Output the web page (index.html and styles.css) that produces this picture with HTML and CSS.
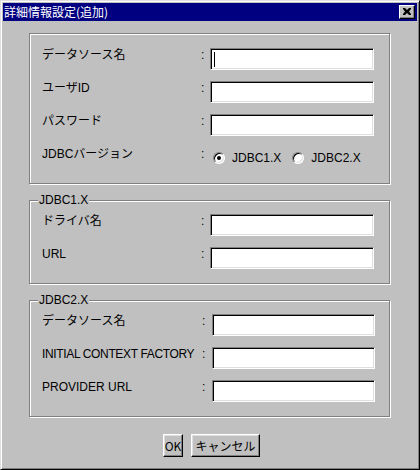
FILE: index.html
```html
<!DOCTYPE html>
<html lang="ja">
<head>
<meta charset="utf-8">
<title>詳細情報設定(追加)</title>
<link rel="stylesheet" href="styles.css">
</head>
<body>
<div class="window">
  <div class="titlebar">
    <span class="title">詳細情報設定(追加)</span>
    <span class="close-btn">
      <svg width="8" height="7" viewBox="0 0 8 7"><path d="M0 0h2l2 2 2-2h2v1l-2 2.5 2 2.5v1h-2l-2-2-2 2h-2v-1l2-2.5-2-2.5z" fill="#000"/></svg>
    </span>
  </div>
  <div class="content">
    <div class="group g1">
      <div class="row">
        <span class="label">データソース名</span><span class="colon">:</span>
        <span class="field"><span class="caret"></span></span>
      </div>
      <div class="row">
        <span class="label">ユーザID</span><span class="colon">:</span>
        <span class="field"></span>
      </div>
      <div class="row">
        <span class="label">パスワード</span><span class="colon">:</span>
        <span class="field"></span>
      </div>
      <div class="row">
        <span class="label">JDBCバージョン</span><span class="colon">:</span>
        <span class="radios">
          <span class="radio checked"></span><span class="rtext">JDBC1.X</span>
          <span class="radio"></span><span class="rtext">JDBC2.X</span>
        </span>
      </div>
    </div>
    <div class="group g2">
      <span class="legend">JDBC1.X</span>
      <div class="row">
        <span class="label">ドライバ名</span><span class="colon">:</span>
        <span class="field"></span>
      </div>
      <div class="row">
        <span class="label">URL</span><span class="colon">:</span>
        <span class="field"></span>
      </div>
    </div>
    <div class="group g3">
      <span class="legend">JDBC2.X</span>
      <div class="row">
        <span class="label">データソース名</span><span class="colon">:</span>
        <span class="field"></span>
      </div>
      <div class="row">
        <span class="label narrow">INITIAL CONTEXT FACTORY</span><span class="colon">:</span>
        <span class="field"></span>
      </div>
      <div class="row">
        <span class="label">PROVIDER URL</span><span class="colon">:</span>
        <span class="field"></span>
      </div>
    </div>
    <div class="buttons">
      <span class="btn ok">OK</span>
      <span class="btn cancel">キャンセル</span>
    </div>
  </div>
</div>
</body>
</html>
```
FILE: styles.css
```css
* { box-sizing: border-box; }
html, body {
  margin: 0;
  padding: 0;
  background: #c0c0c0;
}
body {
  font-family: "Liberation Sans", "Noto Sans CJK JP", sans-serif;
  font-size: 12px;
  color: #000;
}
.window {
  width: 420px;
  height: 470px;
  background: #c0c0c0;
  border-top: 1px solid #dfdfdf;
  border-left: 1px solid #dfdfdf;
  border-right: 1px solid #000;
  border-bottom: 1px solid #000;
  box-shadow: inset 1px 1px 0 #fff, inset -1px -1px 0 #808080;
  padding: 2px;
  display: flex;
  flex-direction: column;
}
.titlebar {
  height: 18px;
  background: #000080;
  color: #fff;
  display: flex;
  align-items: center;
  justify-content: space-between;
  padding: 0 2px 0 1px;
}
.title {
  font-family: "Noto Sans CJK JP", sans-serif;
  font-size: 12px;
  line-height: 16px;
}
.close-btn {
  width: 16px;
  height: 14px;
  background: #c0c0c0;
  border-top: 1px solid #fff;
  border-left: 1px solid #fff;
  border-right: 1px solid #000;
  border-bottom: 1px solid #000;
  box-shadow: inset -1px -1px 0 #808080;
  display: flex;
  align-items: center;
  justify-content: center;
  padding-bottom: 1px;
  padding-right: 1px;
}
.close-btn svg { display: block; }
.content {
  display: flex;
  flex-direction: column;
  padding: 12px 0 0 26px;
}
.group {
  position: relative;
  width: 361px;
  border: 1px solid #808080;
  box-shadow: inset 1px 1px 0 #fff, 1px 1px 0 #fff;
  display: flex;
  flex-direction: column;
  gap: 11px;
  padding: 13px 15px 14px 12px;
}
.g1 { padding-top: 14px; }
.g2, .g3 { margin-top: 16px; }
.legend {
  position: absolute;
  top: -8px;
  left: 8px;
  background: #c0c0c0;
  padding: 0 1px;
  line-height: 14px;
}
.row {
  display: grid;
  grid-template-columns: 158px 10px 164px;
  height: 22px;
  align-items: start;
}
.g3 .row { grid-template-columns: 159px 11px 163px; }
.label {
  font-family: "Liberation Sans", "Noto Sans CJK JP", sans-serif;
  line-height: 14px;
  white-space: nowrap;
}
.label.narrow { letter-spacing: -0.35px; }
.colon {
  line-height: 14px;
  padding-left: 1px;
}
.field {
  height: 22px;
  background: #fff;
  border-top: 1px solid #808080;
  border-left: 1px solid #808080;
  border-right: 1px solid #fff;
  border-bottom: 1px solid #fff;
  box-shadow: inset 1px 1px 0 #000, inset -1px -1px 0 #dfdfdf;
  display: flex;
  align-items: center;
  padding-left: 3px;
}
.caret {
  width: 1px;
  height: 15px;
  background: #000;
}
.radios {
  display: flex;
  align-items: center;
  height: 22px;
  padding-left: 3px;
}
.radio {
  width: 12px;
  height: 12px;
  border-radius: 50%;
  background: #fff;
  border: 1px solid;
  border-color: #808080 #fff #fff #808080;
  box-shadow: inset 1px 1px 0 #000, inset -1px -1px 0 #dfdfdf;
  display: flex;
  align-items: center;
  justify-content: center;
}
.radio.checked::after {
  content: "";
  width: 4px;
  height: 4px;
  border-radius: 50%;
  background: #000;
}
.rtext {
  margin-left: 7px;
  margin-right: 11px;
  line-height: 14px;
}
.buttons {
  display: flex;
  justify-content: center;
  gap: 8px;
  margin-top: 17px;
  margin-left: -26px;
  padding-left: 3px;
}
.btn {
  height: 23px;
  border-top: 1px solid #fff;
  border-left: 1px solid #fff;
  border-right: 1px solid #000;
  border-bottom: 1px solid #000;
  box-shadow: inset -1px -1px 0 #808080, inset 1px 1px 0 #dfdfdf;
  background: #c0c0c0;
  display: flex;
  align-items: center;
  justify-content: center;
  font-family: "Noto Sans CJK JP", sans-serif;
  line-height: 14px;
}
.ok { width: 20px; }
.cancel { width: 69px; }
```
